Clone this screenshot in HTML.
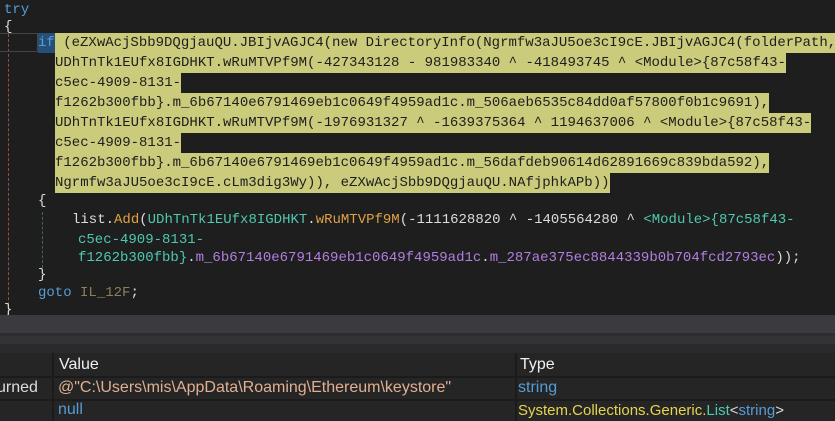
<!DOCTYPE html>
<html><head><style>
body{margin:0;width:835px;height:421px;background:#1e1e1e;overflow:hidden;position:relative;font-family:"Liberation Mono",monospace;font-size:14px;color:#dcdcdc}
.l{position:absolute;white-space:pre;line-height:20px;height:20px}
.h{background:#cbcb7c;color:#1e1e1e;display:inline-block;height:20px}
.k{color:#569cd6}.t{color:#4ec9b0}.m{color:#e0a045}.p{color:#b27fe0}.lb{color:#8c7f5a}
.s{position:absolute;font-family:"Liberation Sans",sans-serif;font-size:15px;white-space:pre}
</style></head><body>
<div style="position:absolute;left:8px;top:34px;height:281px;border-left:1px dashed #a04848"></div>
<div style="position:absolute;left:42px;top:212px;height:56px;border-left:1px dashed #3f6a3f"></div>
<div class="l k" style="left:4px;top:0">try</div>
<div class="l" style="left:4px;top:17px">{</div>
<div style="position:absolute;left:0;top:33px;width:38px;height:19px;border:1px solid #444;border-left:none;box-sizing:border-box"></div>
<div class="l" style="left:38px;top:33px"><span style="background:#264f78;color:#569cd6;display:inline-block;height:20px">if</span><span class="h"> (eZXwAcjSbb9DQgjauQU.JBIjvAGJC4(new DirectoryInfo(Ngrmfw3aJU5oe3cI9cE.JBIjvAGJC4(folderPath, </span></div>
<div class="l" style="left:55px;top:53px"><span class="h">UDhTnTk1EUfx8IGDHKT.wRuMTVPf9M(-427343128 - 981983340 ^ -418493745 ^ &lt;Module&gt;{87c58f43-</span></div>
<div class="l" style="left:55px;top:73px"><span class="h">c5ec-4909-8131-</span></div>
<div class="l" style="left:55px;top:93px"><span class="h">f1262b300fbb}.m_6b67140e6791469eb1c0649f4959ad1c.m_506aeb6535c84dd0af57800f0b1c9691),</span></div>
<div class="l" style="left:55px;top:113px"><span class="h">UDhTnTk1EUfx8IGDHKT.wRuMTVPf9M(-1976931327 ^ -1639375364 ^ 1194637006 ^ &lt;Module&gt;{87c58f43-</span></div>
<div class="l" style="left:55px;top:133px"><span class="h">c5ec-4909-8131-</span></div>
<div class="l" style="left:55px;top:153px"><span class="h">f1262b300fbb}.m_6b67140e6791469eb1c0649f4959ad1c.m_56dafdeb90614d62891669c839bda592),</span></div>
<div class="l" style="left:55px;top:173px"><span class="h">Ngrmfw3aJU5oe3cI9cE.cLm3dig3Wy)), eZXwAcjSbb9DQgjauQU.NAfjphkAPb))</span></div>
<div class="l" style="left:38px;top:191px">{</div>
<div class="l" style="left:72px;top:210px">list.<span class="m">Add</span>(<span class="t">UDhTnTk1EUfx8IGDHKT</span>.<span class="m">wRuMTVPf9M</span>(-1111628820 ^ -1405564280 ^ <span class="t">&lt;Module&gt;{87c58f43-</span></div>
<div class="l t" style="left:78px;top:230px">c5ec-4909-8131-</div>
<div class="l" style="left:78px;top:248px"><span class="t">f1262b300fbb}</span>.<span class="p">m_6b67140e6791469eb1c0649f4959ad1c</span>.<span class="p">m_287ae375ec8844339b0b704fcd2793ec</span>));</div>
<div class="l" style="left:38px;top:265px">}</div>
<div class="l" style="left:38px;top:283px"><span class="k">goto</span> <span class="lb">IL_12F</span>;</div>
<div class="l" style="left:4px;top:300px">}</div>
<div style="position:absolute;left:0;top:315px;width:835px;height:18px;background:#3b3b3f"></div>
<div style="position:absolute;left:0;top:333px;width:835px;height:3px;background:#2d2d30"></div>
<div style="position:absolute;left:0;top:336px;width:835px;height:8px;background:#333337"></div>
<div style="position:absolute;left:0;top:344px;width:835px;height:9px;background:#2a2a2c"></div>
<div style="position:absolute;left:0;top:353px;width:835px;height:68px;background:#252526"></div>
<div style="position:absolute;left:0;top:376px;width:835px;height:2px;background:#1b1b1c"></div>
<div style="position:absolute;left:0;top:399px;width:835px;height:2px;background:#1b1b1c"></div>
<div style="position:absolute;left:52px;top:353px;width:2px;height:68px;background:#1b1b1c"></div>
<div style="position:absolute;left:515px;top:353px;width:2px;height:68px;background:#1b1b1c"></div>
<div class="s" style="left:59px;top:356px;color:#f0f0f0;font-size:16px">Value</div>
<div class="s" style="left:520px;top:356px;color:#f0f0f0;font-size:16px">Type</div>
<div class="s" style="left:-3px;top:379px;color:#dcdcdc;font-size:16px">urned</div>
<div class="s" style="left:58px;top:379px;color:#e0b090;font-size:16px">@"C:\Users\mis\AppData\Roaming\Ethereum\keystore"</div>
<div class="s" style="left:518px;top:379px;color:#569cd6;font-size:16px">string</div>
<div class="s" style="left:58px;top:401px;color:#569cd6;font-size:16px">null</div>
<div class="s" style="left:518px;top:402px;color:#e8d44d">System.Collections.Generic.<span style="color:#4ec9b0">List</span><span style="color:#dcdcdc">&lt;</span><span style="color:#569cd6">string</span><span style="color:#dcdcdc">&gt;</span></div>
</body></html>
